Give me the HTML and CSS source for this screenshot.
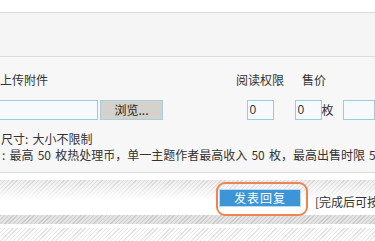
FILE: index.html
```html
<!DOCTYPE html>
<html lang="zh-CN">
<head>
<meta charset="utf-8">
<title>发表回复</title>
<link rel="stylesheet" href="styles.css">
</head>
<body>
<div class="page">
  <div class="top"></div>
  <div class="band"></div>
  <div class="form">
    <div class="fields">
      <div class="col col-upload">
        <div class="label">上传附件</div>
        <div class="file-row">
          <input class="file-text" type="text">
          <button class="browse" type="button">浏览...</button>
        </div>
      </div>
      <div class="col col-read">
        <div class="label">阅读权限</div>
        <div class="ctrl"><input class="small" type="text" value="0"></div>
      </div>
      <div class="col col-price">
        <div class="label">售价</div>
        <div class="ctrl"><input class="small" type="text" value="0"><span class="unit">枚</span></div>
      </div>
      <div class="col col-more">
        <div class="label">&nbsp;</div>
        <div class="ctrl"><input class="wide" type="text"></div>
      </div>
    </div>
    <div class="notes">
      <p class="note note-size">尺寸: 大小不限制</p>
      <p class="note note-price">: 最高 50 枚热处理币，单一主题作者最高收入 50 枚，最高出售时限 5</p>
    </div>
  </div>
  <div class="footer">
    <div class="ring"><button class="submit" type="button">发表回复</button></div>
    <span class="hint">[完成后可按</span>
  </div>
  <div class="below"></div>
</div>
</body>
</html>
```

FILE: styles.css
```css
html, body {
  margin: 0;
  padding: 0;
  background: #fff;
}
body {
  width: 375px;
  height: 241px;
  overflow: hidden;
  font-family: "Noto Sans CJK SC", "Liberation Sans", sans-serif;
  font-size: 12px;
  color: #333;
}
.page {
  width: 375px;
  overflow: hidden;
}
.top {
  height: 12px;
  background: #fff;
  border-bottom: 1px solid #d9d9d9;
}
.band {
  height: 43px;
  background: #f5f5f5;
  border-bottom: 1px solid #dcdcdc;
}
.form {
  height: 116px;
  background: #f7f7f7;
  border-bottom: 1px solid #dcdcdc;
  box-sizing: border-box;
}
.fields {
  display: flex;
  padding-top: 15px;
  white-space: nowrap;
}
.col {
  display: flex;
  flex-direction: column;
  flex: none;
}
.label {
  height: 16px;
  line-height: 16px;
}
.col-upload {
  width: 236px;
}
.col-read {
  width: 48px;
  align-items: center;
}
.col-price {
  width: 40px;
  margin-left: 10px;
  align-items: center;
}
.col-more {
  margin-left: 9px;
}
.file-row,
.ctrl {
  display: flex;
  align-items: center;
  margin-top: 12px;
  height: 20px;
}
.file-row {
  margin-left: -100px;
}
input {
  font-family: "Liberation Sans", sans-serif;
  font-size: 12px;
  color: #333;
  box-sizing: border-box;
  height: 20px;
  margin: 0;
  padding: 0 2px;
  border: 1px solid #9ccbdd;
  background: #f7fafc;
  outline: none;
}
.file-text {
  width: 198px;
}
.browse {
  box-sizing: border-box;
  width: 63px;
  height: 20px;
  margin: 0 0 0 2px;
  padding: 0;
  border: 1px solid #a7cfe0;
  background: #d5d1cb;
  font-family: "Noto Sans CJK SC", sans-serif;
  font-size: 12px;
  color: #222;
  line-height: 18px;
}
.small {
  width: 27px;
}
.unit {
  width: 12px;
  line-height: 20px;
}
.wide {
  width: 32px;
}
.notes {
  margin-top: 11px;
}
.note {
  margin: 0;
  height: 16px;
  line-height: 16px;
  white-space: nowrap;
  word-spacing: 1.5px;
}
.note-size {
  margin-left: 1px;
}
.note-price {
  margin-left: 2px;
}
.footer {
  height: 55px;
  display: flex;
  align-items: center;
  padding-left: 216px;
  box-sizing: border-box;
  white-space: nowrap;
  background:
    linear-gradient(to bottom, rgba(255,255,255,0.15), #fff) 0 7px / 100% 20px no-repeat,
    repeating-linear-gradient(135deg, #cfcfcf 0 1px, #ebebeb 1px 3px) 0 7px / 100% 20px no-repeat,
    repeating-linear-gradient(135deg, #cdcdcd 0 1px, #e3e3e3 1px 3px) 0 42px / 100% 9px no-repeat,
    #fff;
}
.ring {
  border: 2px solid #ef8450;
  border-radius: 9px;
  padding: 5px 5px 7px 1px;
  display: flex;
  margin-top: -3px;
}
.submit {
  box-sizing: border-box;
  width: 82px;
  height: 18px;
  margin: 0;
  padding: 0;
  border: 1px solid #b9dcf3;
  background: #3c95d6;
  color: #fff;
  font-family: "Noto Sans CJK SC", sans-serif;
  font-size: 12px;
  line-height: 16px;
  letter-spacing: 1px;
}
.hint {
  margin-left: 7px;
  margin-top: 1px;
}
.below {
  height: 20px;
  background:
    linear-gradient(to bottom, rgba(255,255,255,0), rgba(255,255,255,0.6)),
    repeating-linear-gradient(135deg, #dedede 0 1px, #fff 1px 3px);
}
```
